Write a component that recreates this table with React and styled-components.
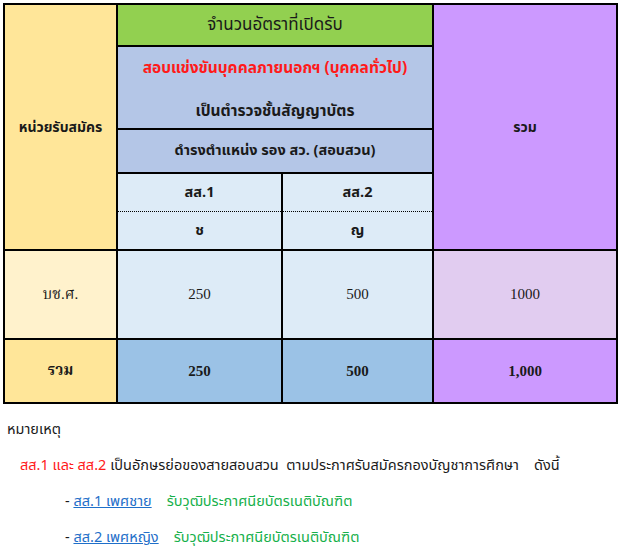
import styled, { createGlobalStyle } from "styled-components";

const Global = createGlobalStyle`
  html, body { margin: 0; padding: 0; background: #fff; }
  body { font-family: Tahoma, "Noto Sans Thai", "Noto Sans", "DejaVu Sans", sans-serif; color: #1a1a1a; }
`;

const Page = styled.div`
  width: 620px;
  height: 553px;
  padding: 3px 0 0 3px;
  box-sizing: border-box;
`;

const Grid = styled.div`
  display: grid;
  width: max-content;
  background: #000;
  padding: 2px;
  gap: 2px;
  grid-template-columns: 111px 163px 149px 182px;
  grid-template-rows: 40px 81px 42px 75px 87px 62px;
`;

const Cell = styled.div`
  background: ${(p) => p.$bg};
  grid-column: ${(p) => p.$col || "auto"};
  grid-row: ${(p) => p.$row || "auto"};
  display: flex;
  align-items: center;
  justify-content: center;
  font-size: ${(p) => p.$size || 14}px;
  font-weight: ${(p) => (p.$bold ? 700 : 400)};
  font-family: ${(p) =>
    p.$serif
      ? `"Liberation Serif", "Noto Serif Thai", "Noto Sans Thai", serif`
      : `Tahoma, "Noto Sans Thai", "Noto Sans", sans-serif`};
`;

const Title = styled(Cell)`
  font-size: 17px;
  font-weight: 400;
`;

const Stack = styled(Cell)`
  flex-direction: column;
  justify-content: space-between;
  padding: 10px 0 5px;
  box-sizing: border-box;
`;

const Red = styled.span`
  color: #ff1a1a;
`;

const SubCol = styled.div`
  background: #ddebf7;
  grid-column: ${(p) => p.$col};
  grid-row: 4;
  display: grid;
  grid-template-rows: 38px 1fr;
`;

const SubPart = styled.div`
  display: flex;
  align-items: center;
  justify-content: center;
  font-size: 14.5px;
  font-weight: 700;
  border-bottom: ${(p) => (p.$dotted ? "1px dotted #000" : "none")};
`;

const Notes = styled.div`
  font-size: 14.5px;
  padding: 16px 0 0 4px;
  display: flex;
  flex-direction: column;
  gap: 16px;
`;

const NoteLine = styled.div`
  padding-left: ${(p) => p.$indent || 0}px;
  white-space: pre;
  line-height: 20px;
`;

const Link = styled.a`
  color: #1f6fc9;
  text-decoration: underline;
`;

const Green = styled.span`
  color: #16b04a;
`;

export default function App() {
  return (
    <Page>
      <Global />
      <Grid>
        <Cell $bg="#ffe699" $col="1" $row="1 / span 4" $bold>หน่วยรับสมัคร</Cell>
        <Title $bg="#92d050" $col="2 / span 2" $row="1">จำนวนอัตราที่เปิดรับ</Title>
        <Cell $bg="#cc99ff" $col="4" $row="1 / span 4" $bold>รวม</Cell>
        <Stack $bg="#b4c6e7" $col="2 / span 2" $row="2" $bold $size={15.5}>
          <Red>สอบแข่งขันบุคคลภายนอกฯ (บุคคลทั่วไป)</Red>
          <span>เป็นตำรวจชั้นสัญญาบัตร</span>
        </Stack>
        <Cell $bg="#b4c6e7" $col="2 / span 2" $row="3" $bold $size={14.5}>ดำรงตำแหน่ง รอง สว. (สอบสวน)</Cell>
        <SubCol $col="2">
          <SubPart $dotted>สส.1</SubPart>
          <SubPart>ช</SubPart>
        </SubCol>
        <SubCol $col="3">
          <SubPart $dotted>สส.2</SubPart>
          <SubPart>ญ</SubPart>
        </SubCol>

        <Cell $bg="#fff2cc" $serif $size={15}>บช.ศ.</Cell>
        <Cell $bg="#ddebf7" $serif $size={15}>250</Cell>
        <Cell $bg="#ddebf7" $serif $size={15}>500</Cell>
        <Cell $bg="#e1ccf0" $serif $size={15}>1000</Cell>

        <Cell $bg="#ffe699" $serif $bold $size={15}>รวม</Cell>
        <Cell $bg="#9bc2e6" $serif $bold $size={15}>250</Cell>
        <Cell $bg="#9bc2e6" $serif $bold $size={15}>500</Cell>
        <Cell $bg="#cc99ff" $serif $bold $size={15}>1,000</Cell>
      </Grid>

      <Notes>
        <NoteLine>หมายเหตุ</NoteLine>
        <NoteLine $indent={13}>
          <Red>สส.1 และ สส.2</Red> เป็นอักษรย่อของสายสอบสวน  ตามประกาศรับสมัครกองบัญชาการศึกษา    ดังนี้
        </NoteLine>
        <NoteLine $indent={58}>
          - <Link>สส.1 เพศชาย</Link>    <Green>รับวุฒิประกาศนียบัตรเนติบัณฑิต</Green>
        </NoteLine>
        <NoteLine $indent={58}>
          - <Link>สส.2 เพศหญิง</Link>    <Green>รับวุฒิประกาศนียบัตรเนติบัณฑิต</Green>
        </NoteLine>
      </Notes>
    </Page>
  );
}
